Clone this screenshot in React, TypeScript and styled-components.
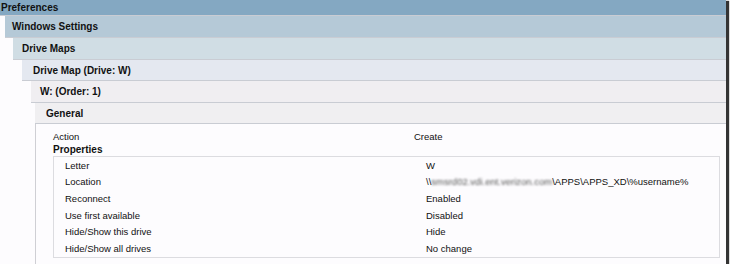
import { ReactNode } from 'react';
import styled, { createGlobalStyle } from 'styled-components';

const GlobalStyle = createGlobalStyle`
  html, body {
    margin: 0;
    padding: 0;
    background: #ffffff;
  }
  body {
    font-family: "Liberation Sans", Arial, sans-serif;
    color: #111;
  }
`;

const Window = styled.div`
  width: 726px;
  height: 264px;
  background: #fdfcfe;
  box-shadow: 2px 2px 1px 1px rgba(30, 30, 30, 0.9);
  overflow: hidden;
  display: flex;
  flex-direction: column;
`;

const SectionBox = styled.div`
  display: flex;
  flex-direction: column;
  flex: 1;
`;

const Header = styled.div<{ $bg: string; $pad: number; $h: number }>`
  height: ${p => p.$h}px;
  flex-shrink: 0;
  box-sizing: border-box;
  background: ${p => p.$bg};
  border-bottom: 1px solid #c9ccd3;
  padding-left: ${p => p.$pad}px;
  display: flex;
  align-items: center;
  font-size: 10px;
  font-weight: bold;
  white-space: nowrap;
`;

const Body = styled.div<{ $indent: number }>`
  display: flex;
  flex-direction: column;
  flex: 1;
  padding-left: ${p => p.$indent}px;
`;

const Panel = styled.div`
  flex: 1;
  background: #fdfcfe;
  border-left: 1px solid #cfcfd4;
  padding: 4px 6px 0 17px;
  font-size: 9.5px;
`;

const Line = styled.div`
  display: grid;
  grid-template-columns: 361px 1fr;
  height: 16px;
  align-items: center;
  white-space: nowrap;
`;

const Heading = styled.div`
  font-weight: bold;
  font-size: 10px;
  height: 12px;
  line-height: 12px;
`;

const PropBox = styled.div`
  border: 1px solid #dcdce0;
  padding: 0 0 0 11px;
  height: 102px;
  box-sizing: border-box;
`;

const PropLine = styled(Line)`
  height: 16.6px;
`;

const Blurred = styled.span`
  filter: blur(1px);
  color: #555;
`;

type SectionProps = {
  title: string;
  bg: string;
  pad: number;
  h: number;
  indent: number;
  children: ReactNode;
};

function Section({ title, bg, pad, h, indent, children }: SectionProps) {
  return (
    <SectionBox>
      <Header $bg={bg} $pad={pad} $h={h}>{title}</Header>
      <Body $indent={indent}>{children}</Body>
    </SectionBox>
  );
}

const properties: [string, ReactNode][] = [
  ['Letter', 'W'],
  ['Location', <>\\<Blurred>smsrd02.vdi.ent.verizon.com</Blurred>\APPS\APPS_XD\%username%</>],
  ['Reconnect', 'Enabled'],
  ['Use first available', 'Disabled'],
  ['Hide/Show this drive', 'Hide'],
  ['Hide/Show all drives', 'No change'],
];

export default function App() {
  return (
    <>
      <GlobalStyle />
      <Window>
        <Section title="Preferences" bg="#84a8c2" pad={1} h={16} indent={5}>
          <Section title="Windows Settings" bg="#b5c9d7" pad={7} h={22} indent={8}>
            <Section title="Drive Maps" bg="#d0dde4" pad={9} h={22} indent={9}>
              <Section title="Drive Map (Drive: W)" bg="#e4e8f0" pad={11} h={21} indent={9}>
                <Section title="W: (Order: 1)" bg="#f0eef1" pad={9} h={22} indent={4}>
                  <Section title="General" bg="#f0eff1" pad={11} h={21} indent={0}>
                    <Panel>
                      <Line>
                        <span>Action</span>
                        <span>Create</span>
                      </Line>
                      <Heading>Properties</Heading>
                      <PropBox>
                        {properties.map(([label, value]) => (
                          <PropLine key={label}>
                            <span>{label}</span>
                            <span>{value}</span>
                          </PropLine>
                        ))}
                      </PropBox>
                    </Panel>
                  </Section>
                </Section>
              </Section>
            </Section>
          </Section>
        </Section>
      </Window>
    </>
  );
}
